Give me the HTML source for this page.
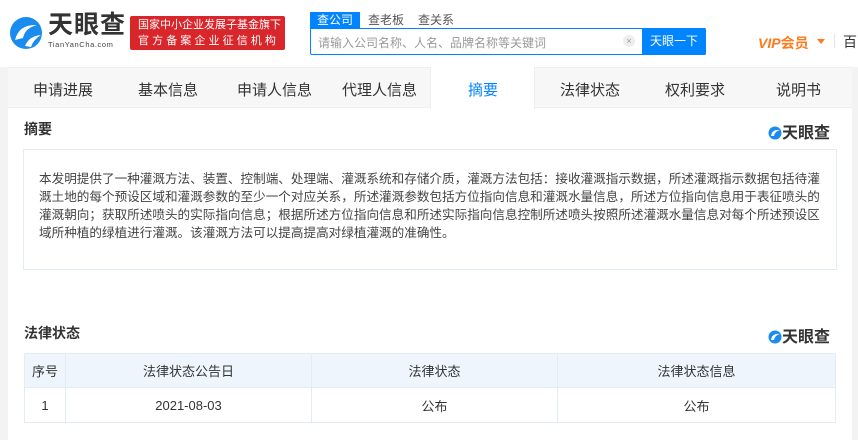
<!DOCTYPE html>
<html><head><meta charset="utf-8"><style>
*{margin:0;padding:0;box-sizing:border-box}
body{width:858px;height:440px;overflow:hidden;background:#fff;font-family:"Liberation Sans","Noto Sans CJK SC",sans-serif;color:#333;position:relative}
.abs{position:absolute}
.strip{left:0;top:67px;width:8px;height:373px;background:#f3f3f3}
.stripr{right:0;top:67px;width:6px;height:373px;background:#f3f3f3}
.nav{left:8px;top:67px;width:844px;height:41px;background:#f7f7f7;border-top:1px solid #eee;border-bottom:1px solid #eee}
.nav span{position:absolute;top:11px;font-size:15px;color:#333}
.logo-s{font-size:16px;font-weight:bold;color:#333}
table{border-collapse:collapse;font-size:13px;color:#333}
td{border:1px solid #e3ebf3;text-align:center}
</style></head><body>
<svg class="abs" style="left:9px;top:16px" width="36" height="34" viewBox="0 0 36 34">
<circle cx="17" cy="17" r="16" fill="#1a8cf0"/>
<path d="M6 24 Q10 8 28 9 Q16 12 14 22 Z" fill="#fff"/>
<path d="M16 30 Q20 20 32 19 Q24 24 22 31 Z" fill="#fff"/>
</svg>
<div class="abs" style="left:48px;top:10px;font-size:25px;font-weight:bold;color:#333;letter-spacing:1px;line-height:30px">天眼查</div>
<div class="abs" style="left:48px;top:40px;font-size:7.5px;color:#444;letter-spacing:.6px;line-height:9px">TianYanCha.com</div>
<div class="abs" style="left:130px;top:16px;width:155px;height:34px;background:#d9262b;border-radius:2px;color:#fff;font-size:11px;line-height:16px;padding:1px 0 0 8px;white-space:nowrap">国家中小企业发展子基金旗下<br><span style="letter-spacing:3.1px">官方备案企业征信机构</span></div>
<div class="abs" style="left:310px;top:12px;width:50px;height:17px;background:#0084ff;color:#fff;font-size:12px;text-align:center;line-height:17px">查公司</div>
<div class="abs" style="left:368px;top:12px;font-size:12px;color:#555;line-height:17px">查老板</div>
<div class="abs" style="left:418px;top:12px;font-size:12px;color:#555;line-height:17px">查关系</div>
<div class="abs" style="left:310px;top:28px;width:396px;height:27px;border:1px solid #0084ff;border-radius:0 2px 2px 2px"></div>
<div class="abs" style="left:318px;top:34px;font-size:12px;color:#999">请输入公司名称、人名、品牌名称等关键词</div>
<div class="abs" style="left:623px;top:35px;width:12px;height:12px;border-radius:6px;background:#eee;color:#999;font-size:9px;text-align:center;line-height:12px">×</div>
<div class="abs" style="left:642px;top:28px;width:64px;height:27px;background:#0084ff;border-radius:0 2px 2px 0;color:#fff;font-size:12px;text-align:center;line-height:27px">天眼一下</div>
<div class="abs" style="left:758px;top:33px;font-size:14px;font-weight:bold;color:#ff7a1a;font-style:italic">VIP<span style="font-style:normal">会员</span></div>
<div class="abs" style="left:817px;top:39px;width:0;height:0;border-left:4px solid transparent;border-right:4px solid transparent;border-top:5px solid #ff7a1a"></div>
<div class="abs" style="left:834px;top:34px;width:1px;height:14px;background:#e5e5e5"></div>
<div class="abs" style="left:843px;top:32px;font-size:14px;color:#333">百</div>
<div class="abs strip"></div><div class="abs stripr"></div>
<div class="abs nav">
<span style="left:25px">申请进展</span><span style="left:130px">基本信息</span><span style="left:229px">申请人信息</span><span style="left:334px">代理人信息</span>
<div style="position:absolute;left:422px;top:-1px;width:105px;height:42px;background:#fff;border-left:1px solid #eee;border-right:1px solid #eee"></div>
<span style="left:460px;color:#0084ff">摘要</span><span style="left:552px">法律状态</span><span style="left:657px">权利要求</span><span style="left:768px">说明书</span>
</div>
<div class="abs" style="left:24px;top:119px;font-size:14px;font-weight:bold;color:#333">摘要</div>
<div class="abs" style="left:768px;top:119px"><svg width="14" height="14" style="vertical-align:-2px"><circle cx="7" cy="7" r="6.5" fill="#1a8cf0"/><path d="M3 10 Q4 3 12 4 Q7 5 6 10Z" fill="#fff"/></svg><span class="logo-s">天眼查</span></div>
<div class="abs" style="left:23px;top:149px;width:814px;height:121px;border:1px solid #e3ebf3"></div>
<div class="abs" style="left:39px;top:170px;width:790px;font-size:12.6px;line-height:18px;color:#444;white-space:nowrap">本发明提供了一种灌溉方法、装置、控制端、处理端、灌溉系统和存储介质，灌溉方法包括：接收灌溉指示数据，所述灌溉指示数据包括待灌<br>溉土地的每个预设区域和灌溉参数的至少一个对应关系，所述灌溉参数包括方位指向信息和灌溉水量信息，所述方位指向信息用于表征喷头的<br>灌溉朝向；获取所述喷头的实际指向信息；根据所述方位指向信息和所述实际指向信息控制所述喷头按照所述灌溉水量信息对每个所述预设区<br>域所种植的绿植进行灌溉。该灌溉方法可以提高提高对绿植灌溉的准确性。</div>
<div class="abs" style="left:24px;top:323px;font-size:14px;font-weight:bold;color:#333">法律状态</div>
<div class="abs" style="left:768px;top:323px"><svg width="14" height="14" style="vertical-align:-2px"><circle cx="7" cy="7" r="6.5" fill="#1a8cf0"/><path d="M3 10 Q4 3 12 4 Q7 5 6 10Z" fill="#fff"/></svg><span class="logo-s">天眼查</span></div>
<table class="abs" style="left:24px;top:353px;width:812px">
<tr style="height:34px;background:#eef5fc"><td style="width:41px">序号</td><td style="width:246px">法律状态公告日</td><td style="width:246px">法律状态</td><td>法律状态信息</td></tr>
<tr style="height:35px"><td>1</td><td>2021-08-03</td><td>公布</td><td>公布</td></tr>
</table>
</body></html>
